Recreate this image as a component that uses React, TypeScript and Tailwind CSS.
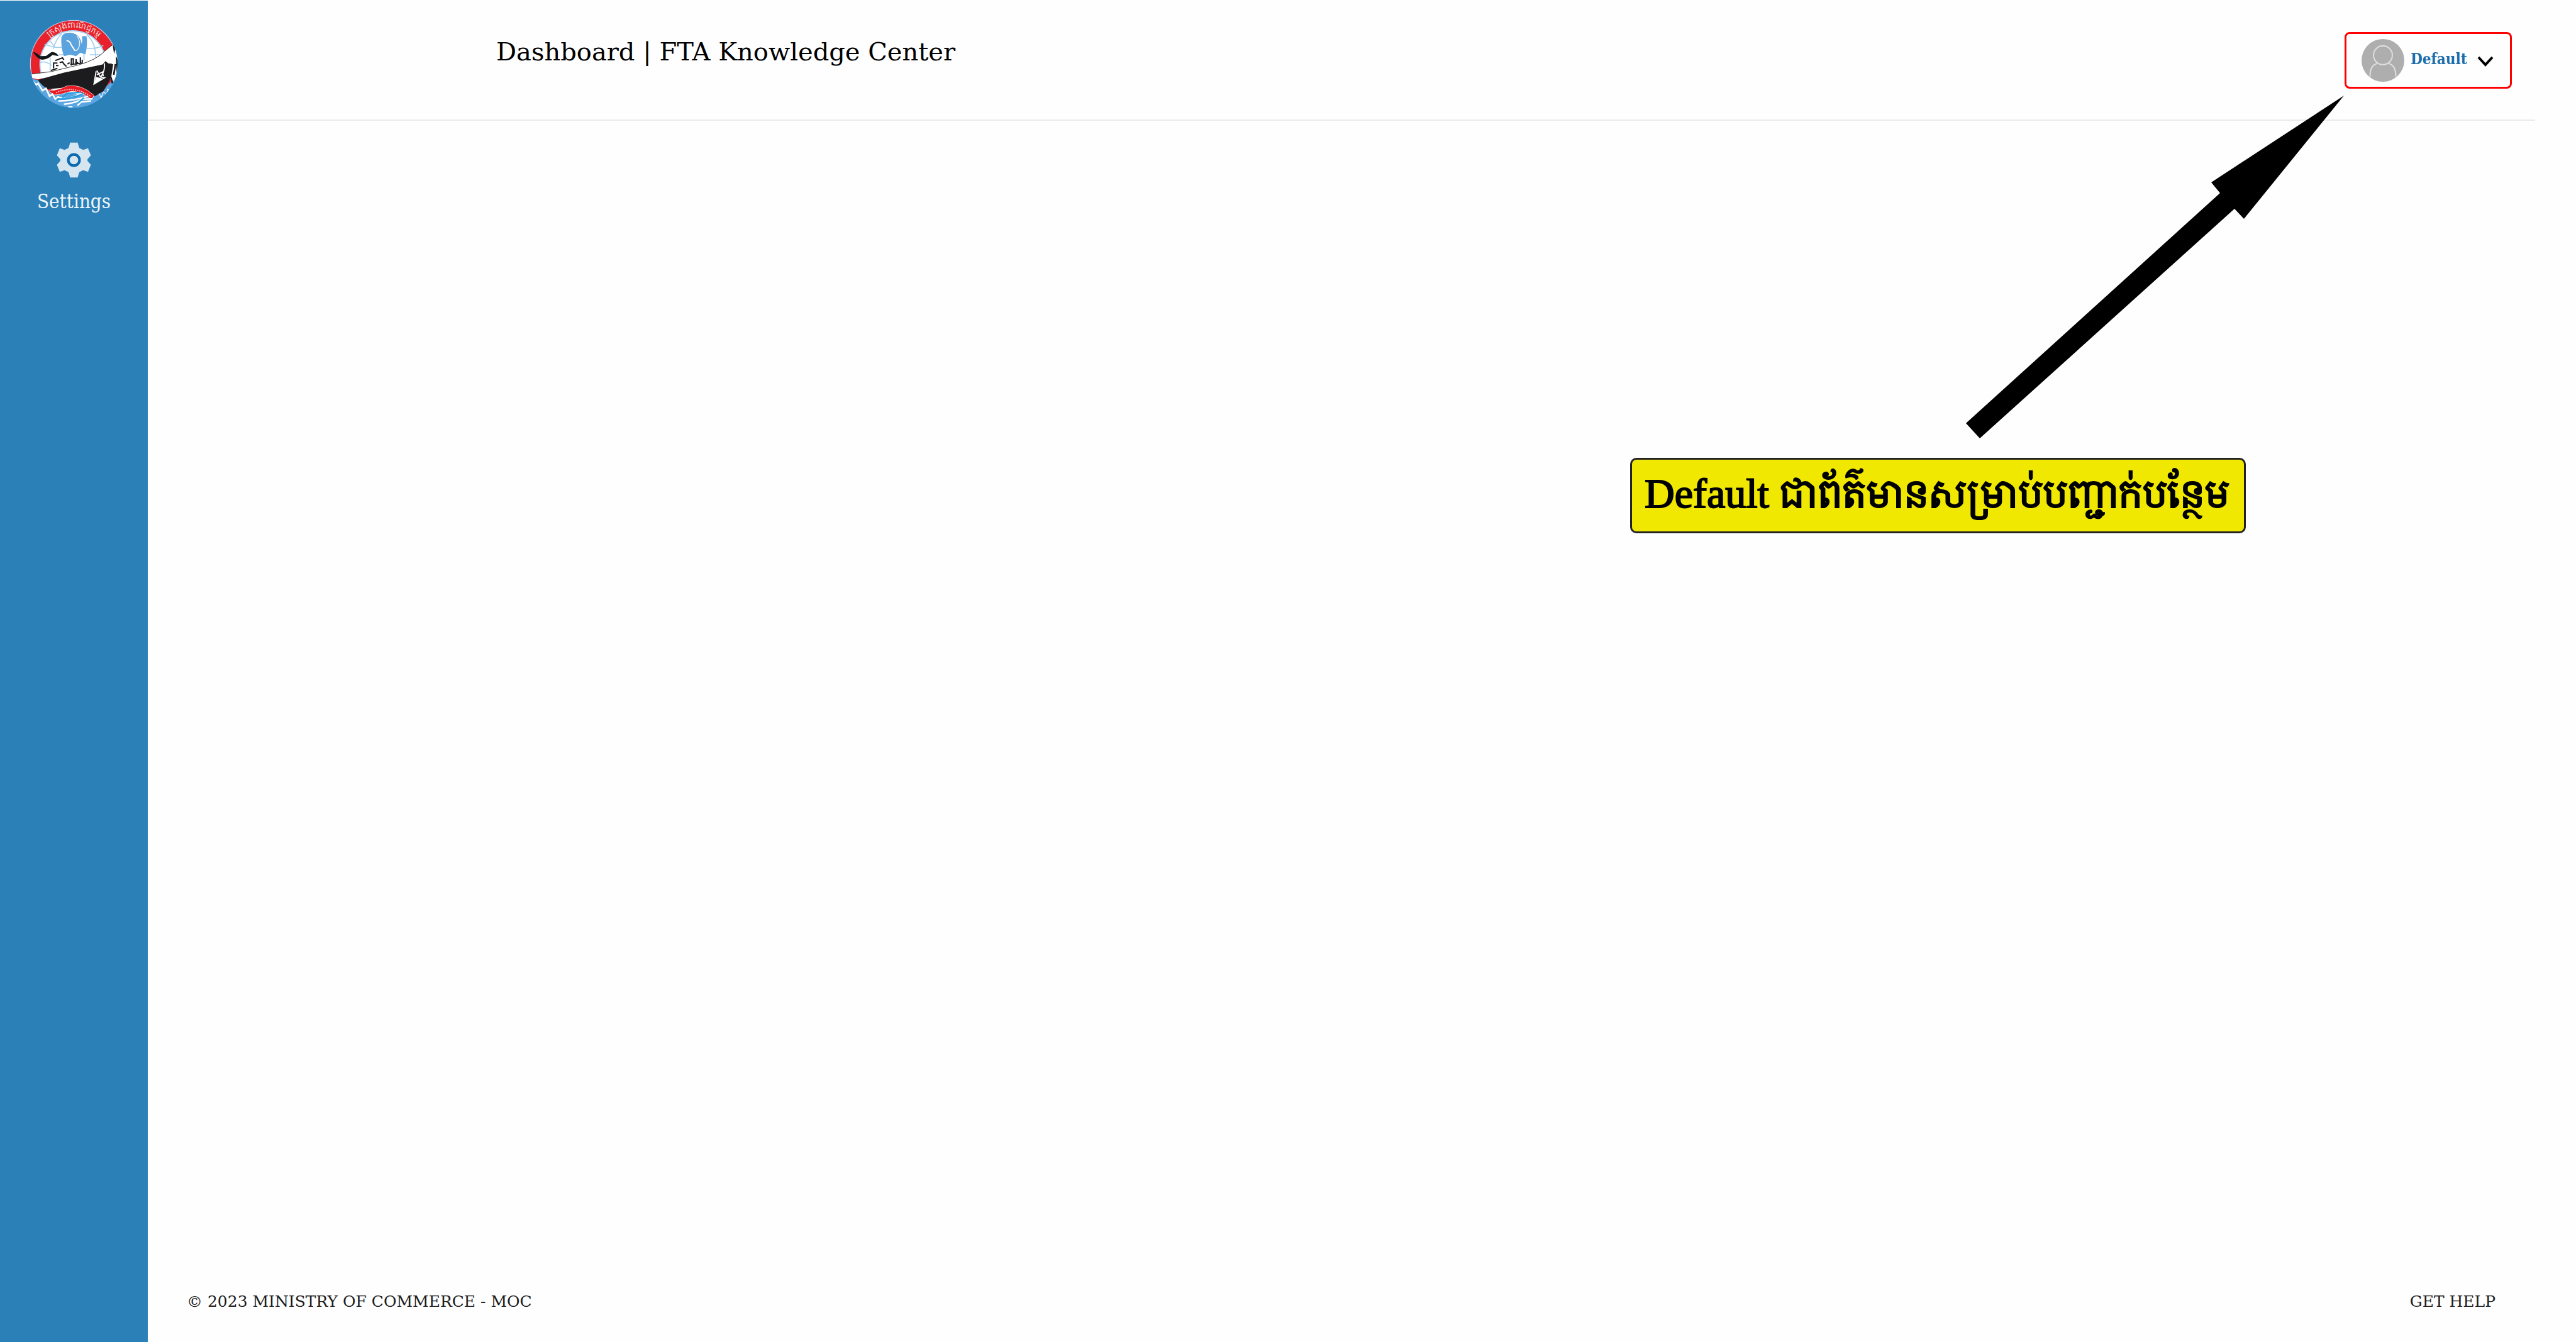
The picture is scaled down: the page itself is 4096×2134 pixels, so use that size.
import React from "react";

const serif = "font-['DejaVu_Serif',serif]";
const condensed = "font-['DejaVu_Serif_Condensed','DejaVu_Serif',serif]";

function MinistryLogo() {
  return (
    <svg viewBox="12 0 720 720" className="size-[164px]" role="img" aria-label="Ministry of Commerce">
      <defs>
        <clipPath id="disc">
          <circle cx="369" cy="353" r="306" />
        </clipPath>
        <path id="arc" d="M144 242 A 250 250 0 0 1 594 242" />
      </defs>
      <circle cx="369" cy="353" r="310" fill="#1193dc" />
      <g clipPath="url(#disc)">
        <rect width="720" height="720" x="9" fill="#e8212b" />
        <circle cx="369" cy="353" r="303" fill="none" stroke="#b9d3ee" strokeWidth="6" />
        <ellipse cx="363" cy="355" rx="230" ry="232" fill="#fff" stroke="#a9d3f2" strokeWidth="8" />
        <g fill="none" stroke="#9fcdf0" strokeWidth="7">
          <path d="M204 400 V310 M225 250 Q240 190 285 140M520 310Q525 210 460 150M135 345 Q170 330 215 365M165 215 Q250 250 290 235M460 245 Q530 250 575 225M200 190 L240 240M480 290 H570M265 290H320M440 330V270" />
        </g>
        <path d="M282 172 Q290 132 345 136 Q395 140 415 182 L425 215 Q432 190 426 160 L458 160 Q468 215 450 288 L415 275 L385 300 L345 290 L300 300 Q278 235 282 172Z" fill="#5aa3df" />
        <path d="M322 192 Q345 195 350 220 L375 258" fill="none" stroke="#fff" strokeWidth="9" strokeLinecap="round" />
        <path d="M392 160 Q418 195 406 235 Q396 262 378 262" fill="none" stroke="#e6f2fb" strokeWidth="6" />
        <path d="M84 270 Q110 275 135 300 L175 298 L212 272 Q245 268 264 300 L220 292 Q185 325 145 325 Q110 315 84 270Z" fill="#10181b" />
        <g fill="none" stroke="#1b1b1f" strokeWidth="9">
          <path d="M208 400 L255 385M228 385 V348 H255 M240 330 L262 322 L290 312 L300 325 M270 345 L290 340 L300 355 L318 372 M245 365 H262M325 355 L340 345 M352 365 V318 L366 318 V360 M385 320V360M378 345H400M415 352V308M428 348V325M345 358 L430 348" />
        </g>
        <path d="M75 425 L210 408 L400 362 Q530 325 585 265 L650 212 L665 350 L560 362 L300 412 L120 462 L80 452Z" fill="#fff" />
        <path d="M75 425 L210 408 L400 362 Q530 325 585 265 L650 212" fill="none" stroke="#28282a" strokeWidth="4" />
        <path d="M640 212 L690 290 V500 L640 520 L600 350 L640 345Z" fill="#fff" />
        <path d="M640 215 L662 240 L650 285Z M662 300 L682 330 V490 L655 500 L668 420Z" fill="#1c1c1f" />
        <path d="M60 455 L120 467 L200 545 L520 580 L640 470 L700 480 V700 H60Z" fill="#5ba5e0" />
        <path d="M118 465 L300 415 L570 358 L590 335 L610 350 L635 352 L620 470 L575 545 L515 580 L460 545 Q400 500 300 520 L190 530 Q150 510 118 465Z" fill="#1c1c1f" />
        <path d="M638 355 L625 440 L640 490 M660 355 L648 430" fill="none" stroke="#1c1c1f" strokeWidth="12" />
        <path d="M583 350 Q590 400 555 450 M525 405 L510 495 L585 450 L555 445 L530 400 M530 430 L570 410 L575 440" fill="none" stroke="#fff" strokeWidth="8" />
        <path d="M508 498 L525 445 L575 458Z" fill="#fff" />
        <path d="M195 542 Q270 535 320 508 Q420 490 512 575 L490 600 Q400 530 330 550 Q270 572 225 570Z" fill="#ea1a24" stroke="#fff" strokeWidth="3" />
        <path d="M245 555 Q370 500 490 582" fill="none" stroke="#f7b6b8" strokeWidth="8" strokeDasharray="9 6" />
        <g fill="none" stroke="#fff" strokeWidth="11">
          <path d="M80 470 L105 500 L120 490 L150 540 L175 525 L200 580 L220 565 L240 600 L258 585 Q320 610 400 570 L440 560M262 612 Q350 615 470 580M300 635 Q370 630 430 600 L500 598M330 655 H360M395 645 L420 620 L490 612" />
          <path d="M545 560 L560 590 L575 550 L600 565 L605 530 L625 545" strokeWidth="5" />
        </g>
        <path d="M250 600 Q350 600 440 560M290 590 L320 560 L420 552M400 625 L440 590" fill="none" stroke="#279fdf" strokeWidth="11" />
      </g>
      <text className="font-['Noto_Serif_Khmer','Noto_Sans_Khmer',serif]" fontSize="54" fill="#fbdcdc" textAnchor="middle">
        <textPath href="#arc" startOffset="50%">ក្រសួងពាណិជ្ជកម្ម</textPath>
      </text>
    </svg>
  );
}

function GearIcon() {
  return (
    <svg viewBox="0 0 80 86" className="h-[59px] w-[55px]" aria-hidden="true">
      <path
        d="M31 2 H49 L53 15 Q57 16 61 19 L73 15 L80 32 L72 41 V45 L80 54 L73 71 L61 67 Q57 70 53 71 L49 84 H31 L27 71 Q23 70 19 67 L7 71 L0 54 L8 45 V41 L0 32 L7 15 L19 19 Q23 16 27 15Z"
        fill="#d6e6f1"
        stroke="#1a72b5"
        strokeWidth="1"
        strokeLinejoin="round"
      />
      <circle cx="40" cy="43" r="13" fill="#d6e6f1" stroke="#0d69b0" strokeWidth="6" />
    </svg>
  );
}

function Avatar() {
  return (
    <svg viewBox="0 0 100 100" className="size-[68px] shrink-0" aria-hidden="true">
      <circle cx="50" cy="50" r="50" fill="#aeaeae" />
      <g fill="none" stroke="#dedede" strokeWidth="3">
        <ellipse cx="50" cy="38" rx="22" ry="22" />
        <path d="M20 88 Q19 62 37 57 M63 57 Q81 62 80 88" />
      </g>
    </svg>
  );
}

export default function App() {
  return (
    <div className={`relative flex min-h-screen bg-[#fefefe] text-black ${serif}`}>
      <aside className="flex w-[235px] shrink-0 flex-col items-center border-t border-white bg-[#2b80b8] pt-5">
        <MinistryLogo />
        <nav className="mt-10">
          <a href="#settings" className={`flex flex-col items-center gap-4 text-[31px] leading-10 text-[#eef5fa] ${condensed}`}>
            <GearIcon />
            Settings
          </a>
        </nav>
      </aside>

      <div className="mr-[65px] flex flex-1 flex-col">
        <header className="flex h-48 items-start justify-between border-b-2 border-[#eaeaea] pr-[37px] pl-[554px]">
          <h1 className="mt-[54px] text-[40px] leading-14">Dashboard | FTA Knowledge Center</h1>
          <button
            type="button"
            className={`mt-[51px] flex h-[90px] w-[266px] items-center rounded-lg border-3 border-[#ff0000] pl-6 text-2xl font-bold text-[#1a6eac] ${condensed}`}
          >
            <Avatar />
            <span className="mb-1 ml-2.5">Default</span>
            <svg viewBox="0 0 26 18" className="mt-1 ml-4 h-[18px] w-[26px]" fill="none" stroke="#000" strokeWidth="4" aria-hidden="true">
              <path d="M2 2 L13 14 L24 2" />
            </svg>
          </button>
        </header>
        <main className="flex-1" />
        <footer className="flex items-center justify-between pr-[63px] pb-11 pl-[62px] text-[25px] leading-10 text-[#1c1c1c]">
          <p>© 2023 MINISTRY OF COMMERCE - MOC</p>
          <a href="#help">GET HELP</a>
        </footer>
      </div>

      <svg viewBox="0 0 603 547" className="absolute top-[151px] right-[368px] h-[547px] w-[603px]" aria-hidden="true">
        <path d="M602 1 L391 139 L405 156 L1 522 L23 546 L428 181 L443 197Z" fill="#000" />
      </svg>
      <p className="absolute top-[728px] right-[525px] h-[120px] w-[979px] rounded-[10px] border-3 border-[#222222] bg-[#f0e800] pl-5 font-['Liberation_Serif','Noto_Serif_Khmer',serif] text-[66px] leading-[108px] whitespace-nowrap [-webkit-text-stroke:2px_#000]">
        Default <span className="text-[60px]">ជាព័ត៌មានសម្រាប់បញ្ជាក់បន្ថែម</span>
      </p>
    </div>
  );
}
